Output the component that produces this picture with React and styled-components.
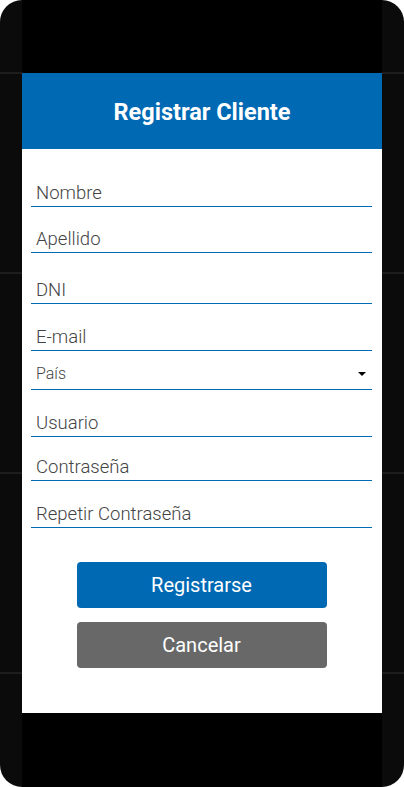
import React from "react";
import styled, { createGlobalStyle } from "styled-components";

const GlobalStyle = createGlobalStyle`
  html, body {
    margin: 0;
    padding: 0;
    background: #fff;
  }
  * {
    box-sizing: border-box;
  }
`;

const Frame = styled.div`
  position: relative;
  width: 404px;
  height: 787px;
  border-radius: 22px;
  overflow: hidden;
  background: #0b0b0b;
  font-family: Roboto, "Liberation Sans", sans-serif;
`;

const Rows = styled.div`
  padding-top: 72px;
`;

const Row = styled.div`
  height: 200px;
  border-top: 2px solid #1d1d1d;
`;

const Backdrop = styled.div`
  position: absolute;
  top: 0;
  bottom: 0;
  left: 22px;
  right: 22px;
  background: #000;
  padding-top: 73px;
`;

const Modal = styled.div`
  background: #fff;
`;

const Header = styled.div`
  height: 76px;
  background: #0069b4;
  display: flex;
  align-items: center;
  justify-content: center;
`;

const Title = styled.h2`
  margin: 0;
  color: #fff;
  font-size: 23.5px;
  font-weight: 700;
  padding-top: 1px;
`;

const Form = styled.form`
  display: flex;
  flex-direction: column;
  padding: 30px 10px 45px 9px;
`;

const Input = styled.input`
  display: block;
  width: 100%;
  height: 28px;
  margin: ${(p) => p.$top || 0}px 0 0;
  padding: 0 5px;
  border: none;
  border-bottom: 1px solid #0069b4;
  outline: none;
  background: transparent;
  font-family: Roboto, "Liberation Sans", sans-serif;
  font-size: 18.5px;
  font-weight: 300;
  color: #444;

  &::placeholder {
    color: #444;
    opacity: 1;
  }
`;

const SelectWrap = styled.div`
  position: relative;
  margin-top: ${(p) => p.$top || 0}px;

  &::after {
    content: "";
    position: absolute;
    right: 6px;
    top: 14px;
    border-left: 4px solid transparent;
    border-right: 4px solid transparent;
    border-top: 4.5px solid #000;
    pointer-events: none;
  }
`;

const Select = styled.select`
  display: block;
  width: 100%;
  height: 32px;
  padding: 0 5px;
  border: none;
  border-bottom: 1px solid #0069b4;
  border-radius: 0;
  outline: none;
  background: transparent;
  appearance: none;
  font-family: Roboto, "Liberation Sans", sans-serif;
  font-size: 16px;
  font-weight: 300;
  color: #444;
`;

const Actions = styled.div`
  display: flex;
  flex-direction: column;
  align-items: center;
  gap: 14px;
  margin-top: 34px;
`;

const Button = styled.button`
  width: 250px;
  height: 46px;
  border: none;
  border-radius: 4px;
  background: ${(p) => p.$color};
  color: #fff;
  font-family: Roboto, "Liberation Sans", sans-serif;
  font-size: 20px;
  font-weight: 400;
  cursor: pointer;
`;

const fields = [
  { name: "Nombre", top: 0 },
  { name: "Apellido", top: 18 },
  { name: "DNI", top: 23 },
  { name: "E-mail", top: 19 },
];

const fields2 = [
  { name: "Usuario", top: 19, type: "text" },
  { name: "Contraseña", top: 16, type: "password" },
  { name: "Repetir Contraseña", top: 19, type: "password" },
];

export default function App() {
  return (
    <>
      <GlobalStyle />
      <Frame>
        <Rows>
          <Row />
          <Row />
          <Row />
          <Row />
        </Rows>
        <Backdrop>
          <Modal>
            <Header>
              <Title>Registrar Cliente</Title>
            </Header>
            <Form onSubmit={(e) => e.preventDefault()}>
              {fields.map((f) => (
                <Input key={f.name} $top={f.top} placeholder={f.name} />
              ))}
              <SelectWrap $top={7}>
                <Select defaultValue="">
                  <option value="">País</option>
                  <option value="ar">Argentina</option>
                </Select>
              </SelectWrap>
              {fields2.map((f) => (
                <Input key={f.name} $top={f.top} type={f.type} placeholder={f.name} />
              ))}
              <Actions>
                <Button type="submit" $color="#0069b4">Registrarse</Button>
                <Button type="button" $color="#686868">Cancelar</Button>
              </Actions>
            </Form>
          </Modal>
        </Backdrop>
      </Frame>
    </>
  );
}
